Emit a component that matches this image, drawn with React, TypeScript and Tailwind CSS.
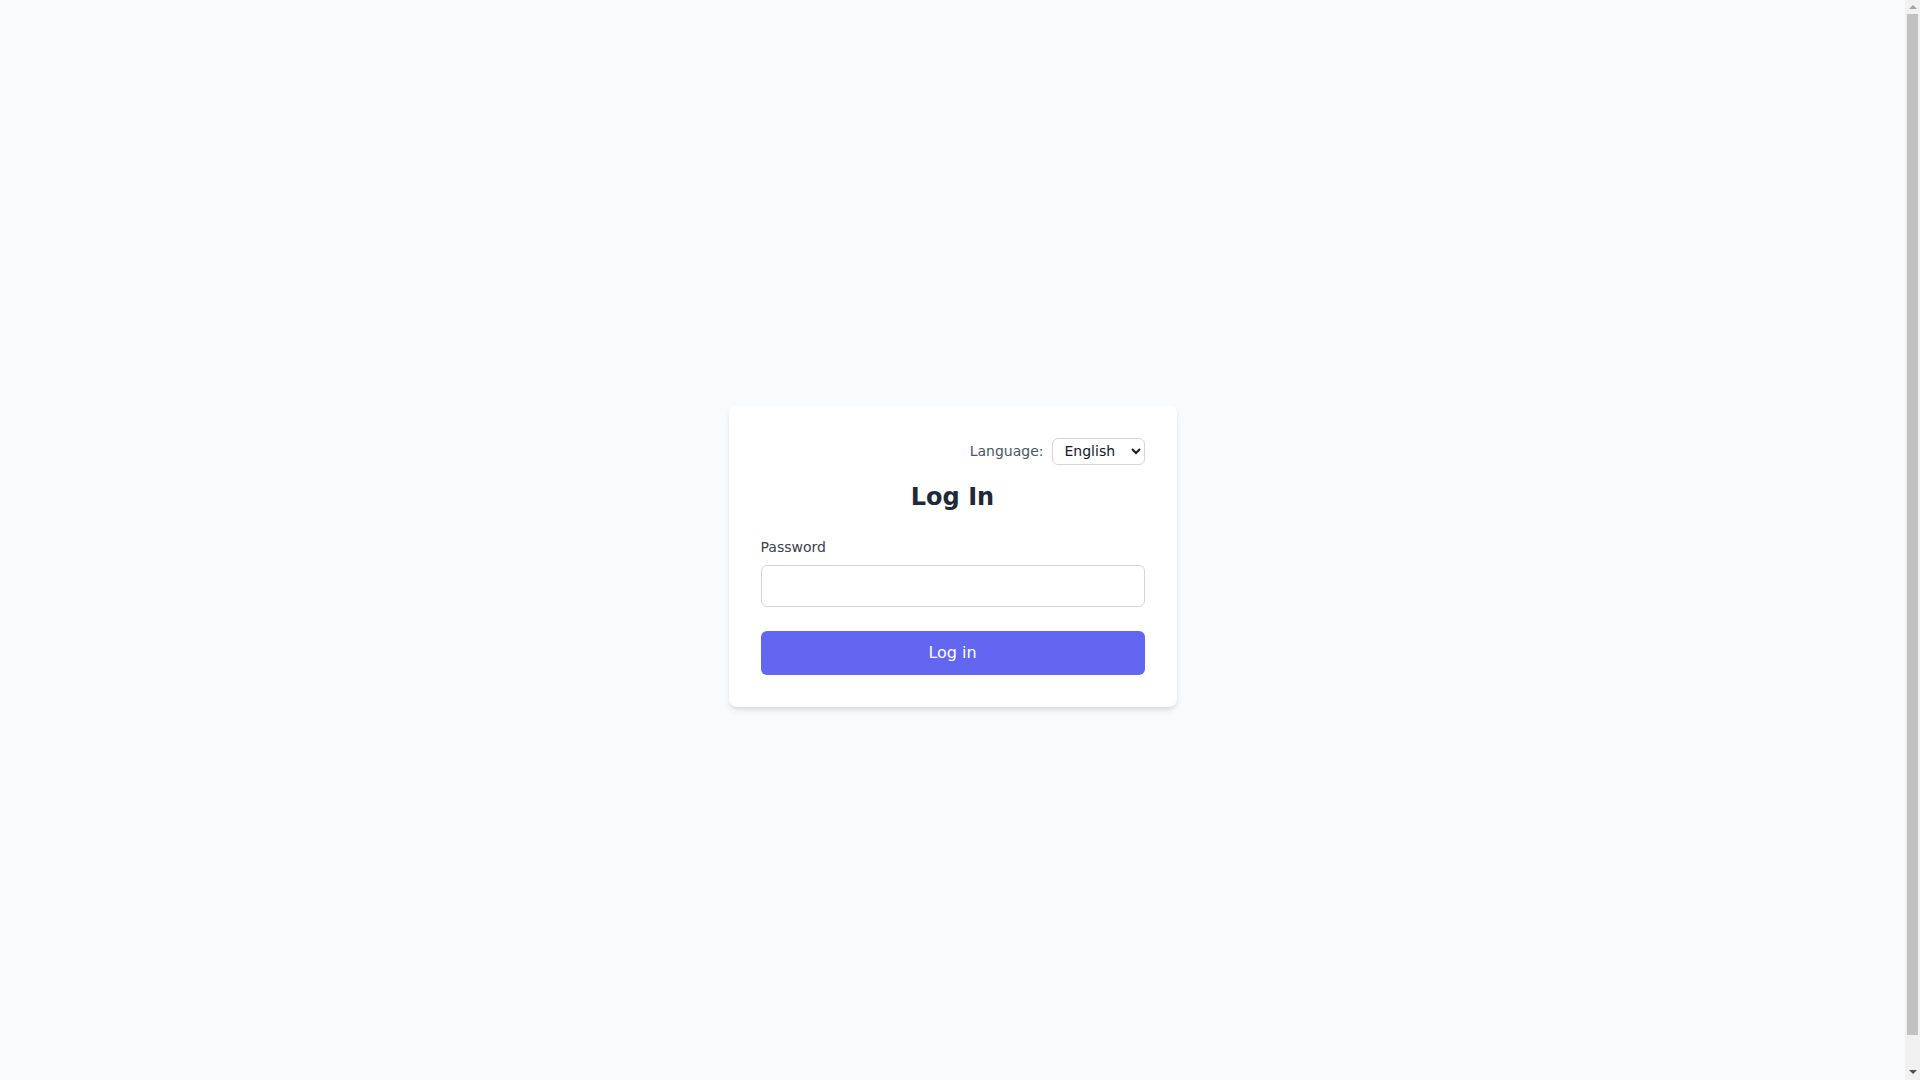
import React from "react";

export default function App() {
  return (
    <div
      className="h-screen overflow-hidden flex bg-[#f9fafb]"
      style={{ fontFamily: '"DejaVu Sans", sans-serif' }}
    >
      <div className="flex-1 min-w-0 py-4">
        <div className="min-h-screen flex items-center justify-center">
          <div className="w-full max-w-md bg-white rounded-lg shadow-md p-8">
            <div className="flex items-center justify-end gap-2 mb-4">
              <label className="text-sm text-[#4b5563]">Language:</label>
              <select className="h-[27px] w-[93px] text-sm text-[#111827] bg-white border border-[#d1d5db] rounded-md pl-2 pr-1">
                <option>English</option>
              </select>
            </div>
            <h1 className="text-2xl font-bold text-[#1f2937] text-center mb-6">Log In</h1>
            <label className="block text-sm text-[#374151] mb-2">Password</label>
            <input
              type="password"
              className="block w-full border border-[#d1d5db] rounded-md px-3 py-2 text-base bg-white"
            />
            <button className="mt-6 w-full bg-[#6366f1] text-white text-base rounded-md py-2.5">
              Log in
            </button>
          </div>
        </div>
      </div>
      <div className="w-[15px] h-screen bg-[#f1f1f1] flex flex-col items-center shrink-0">
        <div className="h-[14px] w-full flex items-center justify-center">
          <svg width="8" height="5" viewBox="0 0 8 5">
            <polygon points="4,0 8,4 0,4" fill="#a3a3a3" />
          </svg>
        </div>
        <div className="h-[1021px] w-[11px] bg-[#c1c1c1]" />
        <div className="flex-1" />
        <div className="h-[15px] w-full flex items-center justify-center">
          <svg width="8" height="5" viewBox="0 0 8 5">
            <polygon points="0,0 8,0 4,4" fill="#505050" />
          </svg>
        </div>
      </div>
    </div>
  );
}
